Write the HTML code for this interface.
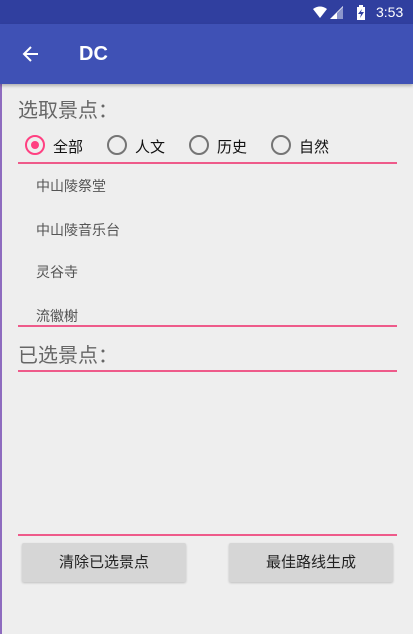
<!DOCTYPE html><html><head><meta charset="utf-8"><style>
body{margin:0;width:413px;height:634px;background:#eeeeee;font-family:"Liberation Sans","Noto Sans CJK SC",sans-serif;position:relative;overflow:hidden}
.a{position:absolute}
.line{position:absolute;left:18px;width:379px;height:2px;background:#ee5a8a}
.r{position:absolute;top:135px;width:16px;height:16px;border:2px solid #757575;border-radius:50%}
.rt{position:absolute;top:136px;font-size:15px;color:#111}
.li{position:absolute;left:36px;font-size:14px;color:#555}
.btn{position:absolute;top:543px;height:39px;background:#d6d6d6;border-radius:2px;box-shadow:0 1px 2px rgba(0,0,0,.2);font-size:15px;color:#222;text-align:center;line-height:39px}
</style></head><body>
<div class="a" style="left:0;top:0;width:2px;height:634px;background:#8e6bbf"></div>
<div class="a" style="left:0;top:0;width:413px;height:24px;background:#303f9f"></div>
<svg class="a" style="left:312px;top:5px" width="60" height="16"><path d="M1 4 Q8 -1 15 4 L8 13Z" fill="#fff"/><path d="M18 14 L31 1 L31 14Z" fill="#fff"/><path d="M25 8 L31 2 L31 14 L25 14Z" fill="#8c96cc"/><rect x="45" y="2" width="8" height="13" fill="#fff"/><rect x="47" y="0" width="4" height="2" fill="#fff"/><path d="M50 4 L46 9 L49 9 L48 13 L52 7 L49 7Z" fill="#303f9f"/></svg>
<div class="a" style="left:376px;top:4px;color:#fff;font-size:14px">3:53</div>
<div class="a" style="left:0;top:24px;width:413px;height:60px;background:#3f51b5;box-shadow:0 2px 3px rgba(0,0,0,.25)"></div>
<svg class="a" style="left:22px;top:45px" width="18" height="18"><path d="M16 9H3M9 2L2 9L9 16" stroke="#fff" stroke-width="2" fill="none"/></svg>
<div class="a" style="left:79px;top:43px;color:#fff;font-size:20px;font-weight:bold">DC</div>
<div class="a" style="left:18px;top:94px;font-size:20px;color:#666">选取景点：</div>
<div class="r" style="left:25px;border-color:#ff4081"></div><div class="a" style="left:31px;top:141px;width:8px;height:8px;border-radius:50%;background:#ff4081"></div>
<div class="rt" style="left:53px">全部</div>
<div class="r" style="left:107px"></div><div class="rt" style="left:135px">人文</div>
<div class="r" style="left:189px"></div><div class="rt" style="left:217px">历史</div>
<div class="r" style="left:271px"></div><div class="rt" style="left:299px">自然</div>
<div class="line" style="top:162px"></div>
<div class="li" style="top:176px">中山陵祭堂</div>
<div class="li" style="top:220px">中山陵音乐台</div>
<div class="li" style="top:262px">灵谷寺</div>
<div class="li" style="top:306px">流徽榭</div>
<div class="line" style="top:325px"></div>
<div class="a" style="left:18px;top:339px;font-size:20px;color:#666">已选景点：</div>
<div class="line" style="top:370px"></div>
<div class="line" style="top:534px"></div>
<div class="btn" style="left:22px;width:164px">清除已选景点</div>
<div class="btn" style="left:229px;width:164px">最佳路线生成</div>
</body></html>
